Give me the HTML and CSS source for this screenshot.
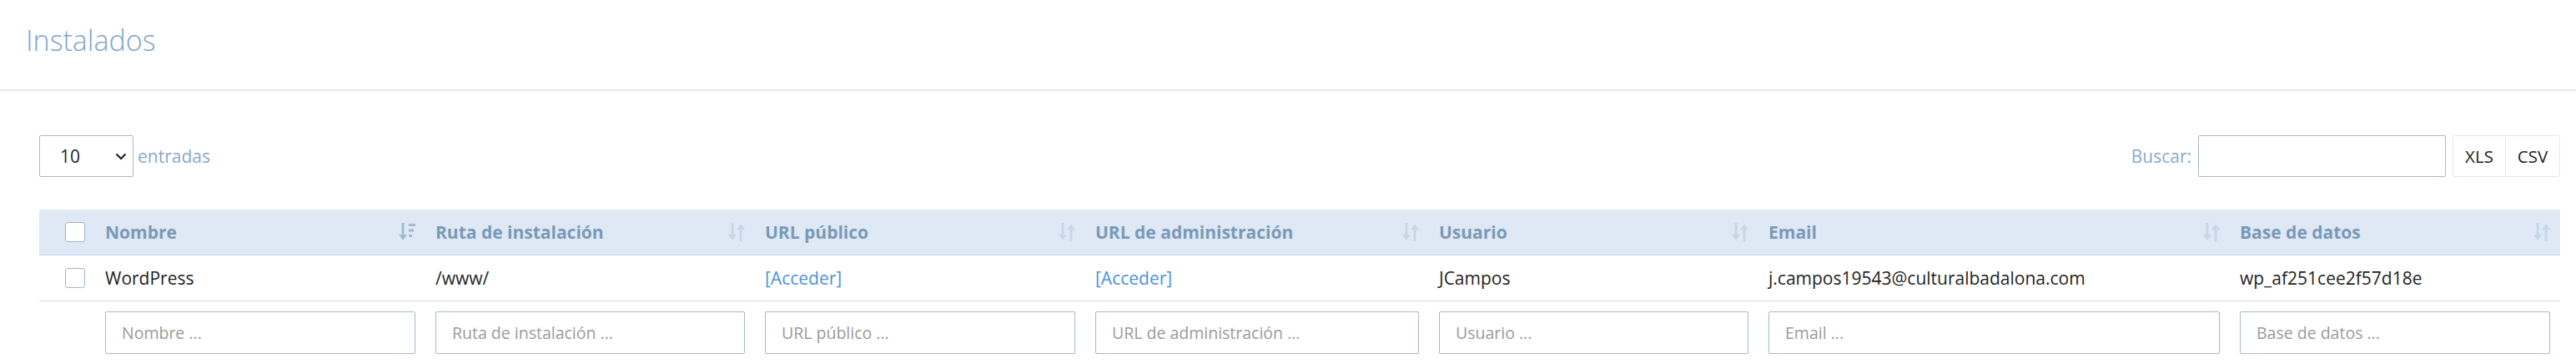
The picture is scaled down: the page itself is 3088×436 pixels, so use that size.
FILE: index.html
```html
<!DOCTYPE html>
<html lang="es">
<head>
<meta charset="utf-8">
<title>Instalados</title>
<link rel="stylesheet" href="styles.css">
</head>
<body>
<div class="page-head">
  <h1 class="title">Instalados</h1>
</div>
<div class="content">
  <div class="toolbar">
    <div class="length">
      <div class="select"><span>10</span>
        <svg class="chev" width="14" height="9" viewBox="0 0 14 9"><path d="M1.5 1.5 L7 7 L12.5 1.5" fill="none" stroke="#222" stroke-width="2.2"/></svg>
      </div>
      <span class="muted">entradas</span>
    </div>
    <div class="search">
      <label class="muted">Buscar:</label>
      <div class="search-input"></div>
      <div class="btn-group"><span class="btn btn-xls">XLS</span><span class="btn btn-csv">CSV</span></div>
    </div>
  </div>

  <table class="grid">
    <colgroup>
      <col class="c-cb"><col class="c-std"><col class="c-std2"><col class="c-std"><col class="c-admin"><col class="c-std2"><col class="c-email"><col>
    </colgroup>
    <thead>
      <tr>
        <th class="cb-cell"><span class="cb"></span></th>
        <th><div class="th-in"><span>Nombre</span>
          <svg class="sort" width="20" height="22" viewBox="0 0 20 22"><path d="M5 0 V16" stroke="#a4bad1" stroke-width="3"/><path d="M0 14 H10 L5 21 Z" fill="#a4bad1"/><rect x="12" y="1" width="8" height="3" fill="#a4bad1"/><rect x="12" y="7.5" width="6" height="3" fill="#a4bad1"/><rect x="12" y="14" width="4" height="3" fill="#a4bad1"/></svg></div></th>
        <th><div class="th-in"><span>Ruta de instalación</span><svg class="sort" width="20" height="22" viewBox="0 0 20 22"><path d="M5 0 V16" stroke="#c6d7e8" stroke-width="3"/><path d="M0 14 H10 L5 21 Z" fill="#c6d7e8"/><path d="M15 6 V22" stroke="#c6d7e8" stroke-width="3"/><path d="M10 8 H20 L15 1 Z" fill="#c6d7e8"/></svg></div></th>
        <th><div class="th-in"><span>URL público</span><svg class="sort" width="20" height="22" viewBox="0 0 20 22"><path d="M5 0 V16" stroke="#c6d7e8" stroke-width="3"/><path d="M0 14 H10 L5 21 Z" fill="#c6d7e8"/><path d="M15 6 V22" stroke="#c6d7e8" stroke-width="3"/><path d="M10 8 H20 L15 1 Z" fill="#c6d7e8"/></svg></div></th>
        <th><div class="th-in"><span>URL de administración</span><svg class="sort" width="20" height="22" viewBox="0 0 20 22"><path d="M5 0 V16" stroke="#c6d7e8" stroke-width="3"/><path d="M0 14 H10 L5 21 Z" fill="#c6d7e8"/><path d="M15 6 V22" stroke="#c6d7e8" stroke-width="3"/><path d="M10 8 H20 L15 1 Z" fill="#c6d7e8"/></svg></div></th>
        <th><div class="th-in"><span>Usuario</span><svg class="sort" width="20" height="22" viewBox="0 0 20 22"><path d="M5 0 V16" stroke="#c6d7e8" stroke-width="3"/><path d="M0 14 H10 L5 21 Z" fill="#c6d7e8"/><path d="M15 6 V22" stroke="#c6d7e8" stroke-width="3"/><path d="M10 8 H20 L15 1 Z" fill="#c6d7e8"/></svg></div></th>
        <th><div class="th-in"><span>Email</span><svg class="sort" width="20" height="22" viewBox="0 0 20 22"><path d="M5 0 V16" stroke="#c6d7e8" stroke-width="3"/><path d="M0 14 H10 L5 21 Z" fill="#c6d7e8"/><path d="M15 6 V22" stroke="#c6d7e8" stroke-width="3"/><path d="M10 8 H20 L15 1 Z" fill="#c6d7e8"/></svg></div></th>
        <th><div class="th-in"><span>Base de datos</span><svg class="sort" width="20" height="22" viewBox="0 0 20 22"><path d="M5 0 V16" stroke="#c6d7e8" stroke-width="3"/><path d="M0 14 H10 L5 21 Z" fill="#c6d7e8"/><path d="M15 6 V22" stroke="#c6d7e8" stroke-width="3"/><path d="M10 8 H20 L15 1 Z" fill="#c6d7e8"/></svg></div></th>
      </tr>
    </thead>
    <tbody>
      <tr class="data">
        <td class="cb-cell"><span class="cb"></span></td>
        <td>WordPress</td>
        <td>/www/</td>
        <td><a class="link" href="#">[Acceder]</a></td>
        <td><a class="link" href="#">[Acceder]</a></td>
        <td>JCampos</td>
        <td>j.campos19543@culturalbadalona.com</td>
        <td>wp_af251cee2f57d18e</td>
      </tr>
      <tr class="filters">
        <td class="cb-cell"></td>
        <td><input class="fin" placeholder="Nombre ..."></td>
        <td><input class="fin" placeholder="Ruta de instalación ..."></td>
        <td><input class="fin" placeholder="URL público ..."></td>
        <td><input class="fin" placeholder="URL de administración ..."></td>
        <td><input class="fin" placeholder="Usuario ..."></td>
        <td><input class="fin" placeholder="Email ..."></td>
        <td><input class="fin" placeholder="Base de datos ..."></td>
      </tr>
    </tbody>
  </table>
</div>
</body>
</html>
```

FILE: styles.css
```css
* { box-sizing: border-box; }
html, body { margin: 0; padding: 0; background: #fff; }
body {
  font-family: "Open Sans", "Noto Sans", sans-serif;
  font-size: 21px;
  color: #1f1f1f;
  width: 3088px;
  overflow: hidden;
}
.page-head {
  padding: 28px 0 39px 31px;
  border-bottom: 2px solid #e6e9ed;
}
.title {
  margin: 0;
  font-weight: 300;
  font-size: 34px;
  line-height: 40px;
  color: #7fa5cb;
}
.content {
  padding: 53px 19px 0 47px;
}
.toolbar {
  display: flex;
  justify-content: space-between;
  align-items: center;
  height: 50px;
  margin-bottom: 39px;
}
.length { display: flex; align-items: center; gap: 5px; }
.select {
  width: 113px;
  height: 50px;
  border: 1px solid #a9b8c9;
  border-radius: 2px;
  display: flex;
  align-items: center;
  justify-content: space-between;
  padding: 0 7px 0 24px;
  font-size: 21px;
  color: #1f1f1f;
}
.chev { display: block; }
.muted { color: #8aaac9; font-size: 21px; }
.search { display: flex; align-items: center; }
.search label { margin-right: 8px; }
.search-input {
  width: 297px;
  height: 50px;
  border: 1px solid #a9b8c9;
  border-radius: 2px;
}
.btn-group {
  display: flex;
  margin-left: 8px;
  border: 1px solid #e3e7eb;
  border-radius: 3px;
  height: 50px;
}
.btn {
  display: flex;
  align-items: center;
  justify-content: center;
  color: #1f1f1f;
  font-size: 20.5px;
}
.btn-xls { width: 62px; }
.btn-csv { width: 65px; border-left: 1px solid #e3e7eb; }

.grid {
  border-collapse: collapse;
  table-layout: fixed;
  width: 3022px;
}
.c-cb { width: 67px; }
.c-std { width: 396px; }
.c-std2 { width: 395px; }
.c-admin { width: 412px; }
.c-email { width: 565px; }
.grid th {
  background: #dfe9f5;
  height: 54px;
  padding: 0 12px;
  border-bottom: 1px solid #c8d6e5;
  text-align: left;
  font-weight: 700;
  color: #7b99b6;
  vertical-align: middle;
}
.th-in { display: flex; align-items: center; justify-content: space-between; }
.sort { display: block; }
.grid td {
  padding: 0 12px;
  vertical-align: middle;
  white-space: nowrap;
}
.grid th.cb-cell, .grid td.cb-cell { padding: 0 0 0 31px; }
.data td {
  height: 55px;
  border-bottom: 1px solid #d2dce7;
}
.cb {
  display: block;
  width: 24px;
  height: 24px;
  border: 1px solid #a8b4c2;
  border-radius: 3px;
  background: #fff;
}
.link { color: #4a92dc; text-decoration: none; }
.filters td { padding-top: 12px; padding-bottom: 12px; }
.fin {
  display: block;
  width: 100%;
  height: 51px;
  border: 1px solid #a9b8c9;
  border-radius: 2px;
  padding: 0 0 0 19px;
  font-family: "Open Sans", "Noto Sans", sans-serif;
  font-size: 19.5px;
  color: #1f1f1f;
  background: #fff;
  outline: none;
}
.fin::placeholder { color: #9b9b9b; }
```
